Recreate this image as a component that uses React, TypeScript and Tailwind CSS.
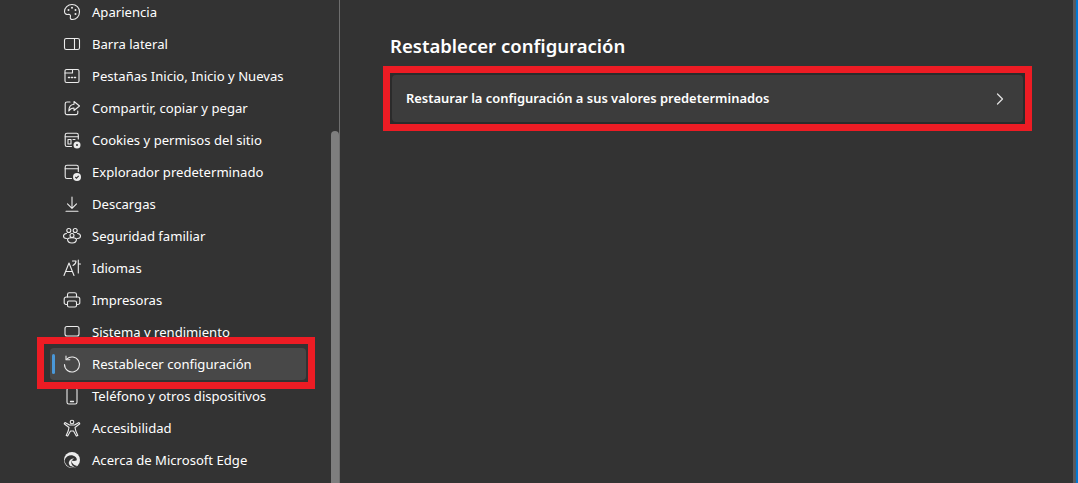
import { ChevronRight } from 'lucide-react';
import type { ReactNode } from 'react';

const s = { fill: 'none', stroke: 'currentColor', strokeWidth: 1.1, strokeLinecap: 'round', strokeLinejoin: 'round' } as const;

const icons: Record<string, ReactNode> = {
  palette: (
    <>
      <path d="M10 2.500c4.400 0 7.500 3 7.500 7.200 0 4.600-3.200 7.800-7 7.800-1.800 0-2.600-1-2.100-2.600.5-1.500-.4-2.700-2-2.500-2 .3-3.900-.5-3.900-3C2.500 5.800 5.800 2.500 10 2.500Z" {...s} />
      <circle cx="6.500" cy="8" r="1" fill="currentColor" />
      <circle cx="10" cy="5.800" r="1" fill="currentColor" />
      <circle cx="13.500" cy="8" r="1" fill="currentColor" />
      <circle cx="13.500" cy="12" r="1" fill="currentColor" />
    </>
  ),
  sidebar: (
    <>
      <rect x="2.500" y="4.500" width="15" height="11" rx="1.800" {...s} />
      <path d="M12.500 4.500v11" {...s} />
    </>
  ),
  tabs: (
    <>
      <path d="M4.500 3.500h11a1.500 1.500 0 0 1 1.500 1.500v10a1.500 1.500 0 0 1-1.500 1.500h-11A1.500 1.500 0 0 1 3 15V5a1.500 1.500 0 0 1 1.500-1.500Z" {...s} />
      <path d="M3 7h7.500V3.500" {...s} />
      <path d="M6.500 11.500h1M9.500 11.500h1M12.500 11.500h1" {...s} strokeWidth={1.500} />
    </>
  ),
  share: (
    <>
      <path d="M8 4H5a1.800 1.800 0 0 0-1.800 1.800v9A1.800 1.800 0 0 0 5 16.600h9a1.800 1.800 0 0 0 1.800-1.800V13" {...s} />
      <path d="M12 3.500 17.500 8 12 12.500V10c-2.500 0-4 1-5.200 3 0-3.800 1.800-6.500 5.200-6.800V3.500Z" {...s} />
    </>
  ),
  cookies: (
    <>
      <path d="M9.500 16.500H5A1.800 1.800 0 0 1 3.200 14.700V5A1.800 1.800 0 0 1 5 3.200h9.500A1.800 1.800 0 0 1 16.300 5v4" {...s} />
      <path d="M3.200 6.800h13M6 9.500h3v4.500H6zM11 9.500h2" {...s} />
      <circle cx="15" cy="15" r="3.500" fill="currentColor" />
      <circle cx="15" cy="15" r="1" fill="#333333" />
    </>
  ),
  browser: (
    <>
      <path d="M9.500 16.500H5A1.800 1.800 0 0 1 3.200 14.700V5A1.800 1.800 0 0 1 5 3.200h9.500A1.800 1.800 0 0 1 16.300 5v4.500" {...s} />
      <path d="M3.200 6.800h13" {...s} />
      <circle cx="15" cy="15" r="4" fill="currentColor" />
      <path d="m13.300 15 1.200 1.200 2.200-2.300" fill="none" stroke="#333333" strokeWidth={1.100} />
    </>
  ),
  download: <path d="M10 3v11M5.500 9.800 10 14.300l4.500-4.500M4 17.300h12" {...s} />,
  family: (
    <>
      <circle cx="6.800" cy="4.500" r="2" {...s} />
      <circle cx="13.200" cy="4.500" r="2" {...s} />
      <circle cx="10" cy="9.500" r="2" {...s} />
      <path d="M4.500 7.500C3 7.700 1.500 8.500 1.500 10c0 1.500 1.200 2.500 3 2.500M15.500 7.500c1.500.2 3 1 3 2.500 0 1.500-1.200 2.500-3 2.500M5.500 13c0 2.500 2 4 4.500 4s4.500-1.500 4.500-4c-1-1-2.500-1.200-4.500-1.200S6.500 12 5.500 13Z" {...s} />
    </>
  ),
  language: (
    <>
      <path d="M2 17.500 7 5l5 12.500M3.700 13.500h6.600" {...s} />
      <path d="M10.500 3h3.500c0 1.800-1 3.500-3 4.500M16.300 2v13M16.300 6h2.200" {...s} />
    </>
  ),
  printer: (
    <>
      <path d="M5.500 7V4.500A1.800 1.800 0 0 1 7.300 2.800h5.400a1.800 1.800 0 0 1 1.800 1.700V7" {...s} />
      <path d="M5.500 14.500H4A1.800 1.800 0 0 1 2.200 12.700V9A2 2 0 0 1 4.200 7h11.600a2 2 0 0 1 2 2v3.700a1.800 1.800 0 0 1-1.800 1.800h-1.500" {...s} />
      <rect x="5.500" y="11" width="9" height="6" rx="1.500" {...s} />
    </>
  ),
  system: <rect x="3" y="4.500" width="14" height="9.500" rx="2" {...s} />,
  reset: (
    <>
      <path d="M4.700 5.200A7.500 7.500 0 1 1 2.500 10.500" {...s} />
      <path d="M4 2v3.800h3.800" {...s} />
    </>
  ),
  phone: (
    <>
      <rect x="5" y="2" width="10" height="16" rx="1.800" {...s} />
      <path d="M8.500 15.500h3" {...s} strokeWidth={1.300} />
    </>
  ),
  access: (
    <>
      <circle cx="10" cy="4" r="1.800" {...s} />
      <path d="M3 4.500 7.500 7h5L17 4.500l.8 1.300L13 9.500l.8 3.500 2 4.500-1.500.6L11.500 13h-3l-2.800 5.100-1.500-.6 2-4.500L7 9.500 2.200 5.800 3 4.500Z" {...s} />
    </>
  ),
  edge: (
    <>
      <circle cx="10" cy="10" r="8" fill="currentColor" />
      <path d="M2.500 10.500C3.500 6.500 7.500 4.800 10.800 5.500c2.700.6 4.200 2.400 4 4.700-1.500 1-3.600 1-5.200.3 0 2.800 2.200 5 5.900 5.400-1.500 1.300-3.500 2-5.500 1.800-4-.5-7-3.500-7.500-7.200Z" fill="#333333" />
      <path d="M6.800 12.500c.8-3 3-4.300 5.400-4-1.800.5-3.200 2.500-2.800 5 .4 1.500 1.500 2.800 3 3.400-3 .4-5.800-1.500-5.600-4.400Z" fill="currentColor" />
    </>
  ),
};

const items = [
  ['palette', 'Apariencia'],
  ['sidebar', 'Barra lateral'],
  ['tabs', 'Pestañas Inicio, Inicio y Nuevas'],
  ['share', 'Compartir, copiar y pegar'],
  ['cookies', 'Cookies y permisos del sitio'],
  ['browser', 'Explorador predeterminado'],
  ['download', 'Descargas'],
  ['family', 'Seguridad familiar'],
  ['language', 'Idiomas'],
  ['printer', 'Impresoras'],
  ['system', 'Sistema y rendimiento'],
  ['reset', 'Restablecer configuración'],
  ['phone', 'Teléfono y otros dispositivos'],
  ['access', 'Accesibilidad'],
  ['edge', 'Acerca de Microsoft Edge'],
];

function Icon({ name }: { name: string }) {
  return (
    <svg viewBox="0 0 20 20" className="h-5 w-5 shrink-0 text-[#ececec]">
      {icons[name]}
    </svg>
  );
}

export default function App() {
  return (
    <div className="flex h-[483px] w-[1078px] overflow-hidden bg-[#333333] font-['Noto_Sans',sans-serif] text-[13.1px] text-white">
      <aside className="flex h-full w-[340px] shrink-0 border-r border-[#6e6e6e]">
        <nav className="-mt-[4px] ml-[50px] w-[256px]">
          {items.map(([icon, label]) => {
            const active = icon === 'reset';
            return (
              <div key={icon} className={active ? 'relative z-10' : ''}>
                {active && <div className="absolute -bottom-[9px] -left-[13px] -right-[9px] -top-[11px] border-[7px] border-[#ed1c24] bg-[#333333]" />}
                <div className={`relative flex h-8 items-center gap-[10px] rounded pl-[12px] ${active ? 'bg-[#484848]' : ''}`}>
                  {active && <span className="absolute left-[2px] top-[6px] h-[20px] w-[3px] rounded-full bg-[#4a98d8]" />}
                  <Icon name={icon} />
                  <span className="whitespace-nowrap pt-[1px]">{label}</span>
                </div>
              </div>
            );
          })}
        </nav>
        <div className="ml-auto mt-[131px] h-[352px] w-2 rounded-t-full bg-[#7e7e7e]" />
      </aside>
      <main className="relative flex-1 pl-[43px] pr-[46px] pt-[33px]">
        <h1 className="ml-[7px] text-[18.55px] font-semibold leading-[26px]">Restablecer configuración</h1>
        <div className="mt-[7px] border-[7px] border-[#ed1c24] bg-[#2b2b2b] p-[2px]">
          <div className="flex h-[47px] items-center justify-between rounded bg-[#3c3c3c] pl-[14px] pr-[13.5px]">
            <span className="text-[12.93px] font-semibold">Restaurar la configuración a sus valores predeterminados</span>
            <ChevronRight className="h-5 w-5 text-[#e0e0e0]" strokeWidth={1.500} />
          </div>
        </div>
        <div className="absolute right-0 top-0 h-full w-[5px] border-r-2 border-[#0078d4] bg-[#5a5a5f]" />
      </main>
    </div>
  );
}
